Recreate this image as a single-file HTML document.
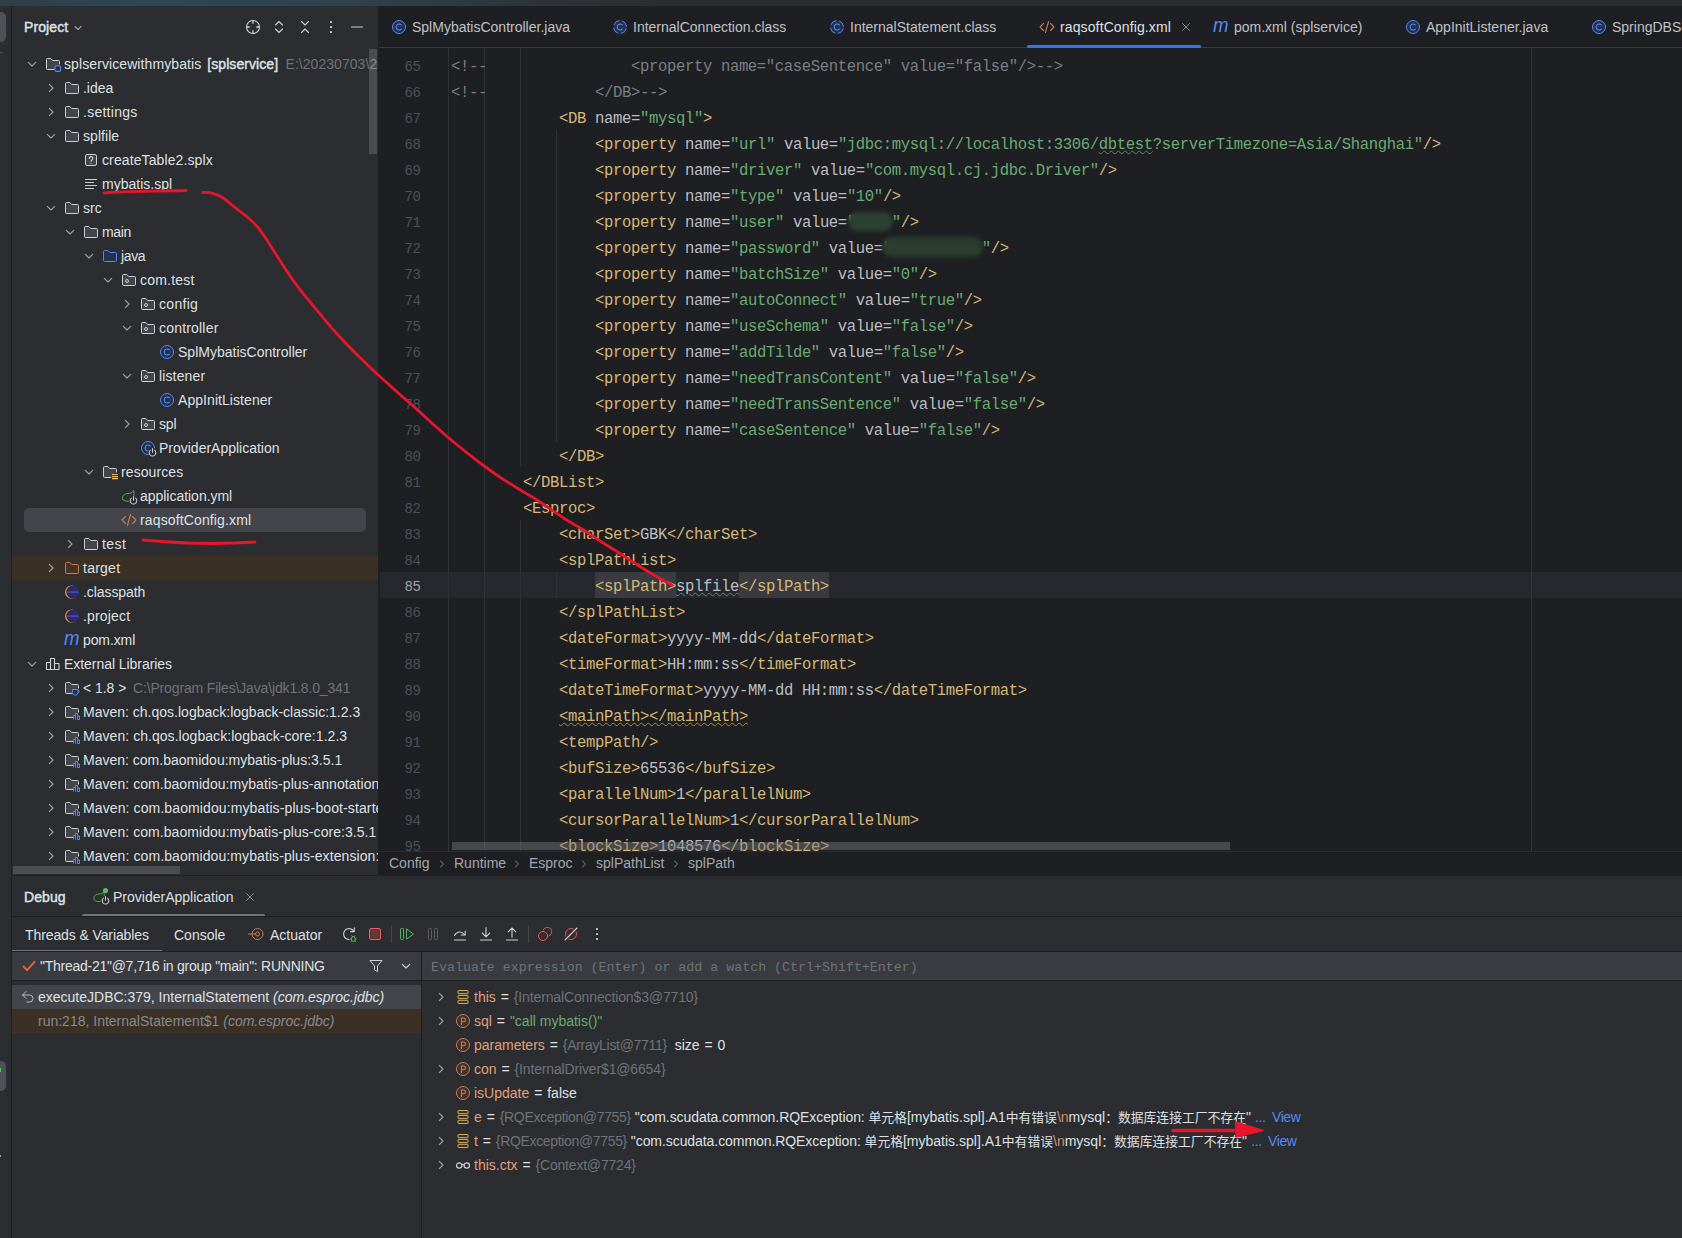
<!DOCTYPE html><html><head><meta charset="utf-8"><title>IDE</title><style>
*{box-sizing:border-box;margin:0;padding:0}
html,body{width:1682px;height:1238px;overflow:hidden;background:#2b2d30}
body{font-family:"Liberation Sans","Noto Sans CJK SC",sans-serif;font-size:14px;color:#dfe1e5;-webkit-font-smoothing:antialiased}
#root{position:relative;width:1682px;height:1238px;overflow:hidden;background:#2b2d30}
.a{position:absolute;white-space:pre}
.t{position:absolute;white-space:pre;line-height:24px;height:24px}
.g{color:#6f737a}
.ic{position:absolute;width:16px;height:16px}
svg{display:block;overflow:visible}
.code{position:absolute;left:451px;white-space:pre;font-family:"Liberation Mono","Noto Sans CJK SC",monospace;font-size:15.6px;letter-spacing:-0.3616px;line-height:26px;height:26px;color:#bcbec4}
.ln{position:absolute;width:40px;left:380.2px;text-align:right;font-family:"Liberation Mono","Noto Sans CJK SC",monospace;font-size:14px;letter-spacing:-0.6px;line-height:26px;height:26px;color:#4b5059}
.tg{color:#d5b778} .s{color:#6aab73} .c{color:#7a7e85}
.wv{text-decoration:underline wavy #5a8a5e 1px;text-underline-offset:1px}
.ww{text-decoration:underline wavy #a08c4a 1px;text-underline-offset:1px}
.hl{background:#393b41;display:inline-block;height:26px;vertical-align:top}
.vn{color:#e0a07a}
.mono{font-family:"Liberation Mono","Noto Sans CJK SC",monospace}
</style></head><body><div id="root">
<div class="a" style="left:0px;top:0px;width:1682px;height:6px;background:linear-gradient(90deg,#2d3e47 0,#2f4854 9%,#2e414b 22%,#2c343a 32%,#2b2d30 40%);"></div>
<div class="a" style="left:0px;top:6px;width:11px;height:1232px;background:#2b2d30;"></div>
<div class="a" style="left:11px;top:6px;width:1px;height:1232px;background:#1e1f22;"></div>
<div class="a" style="left:-6px;top:12px;width:12px;height:30px;background:#4e5157;border-radius:5px"></div>
<div class="a" style="left:0px;top:52px;width:3px;height:1px;background:#4a4c50;"></div>
<div class="a" style="left:-6px;top:1061px;width:12px;height:30px;background:#4e5157;border-radius:5px"></div>
<div class="a" style="left:0px;top:1068px;width:1px;height:4px;background:#57c55a;"></div>
<div class="a" style="left:0px;top:1155px;width:1px;height:2px;background:#9da0a8;"></div>
<div class="a" style="left:12px;top:6px;width:366px;height:869px;background:#2b2d30;"></div>
<div class="a" style="left:378px;top:6px;width:1px;height:869px;background:#1e1f22;"></div>
<div class="t " style="left:24px;top:15.4px;-webkit-text-stroke:0.45px #dfe1e5;letter-spacing:0.1px">Project</div>
<div class="ic" style="left:70px;top:20px"><svg width="16" height="16" viewBox="0 0 16 16" fill="none"><path d="M5 6.5 L8 9.5 L11 6.5" stroke="#9da0a8" stroke-width="1.1" stroke-linecap="round" stroke-linejoin="round"/></svg></div>
<div class="ic" style="left:245px;top:19px"><svg width="16" height="16" viewBox="0 0 16 16" fill="none"><circle cx="8" cy="8" r="6.5" stroke="#ced0d6" stroke-width="1.1"/><path d="M8 1.5 v3.2 M8 11.3 v3.2 M1.5 8 h3.2 M11.3 8 h3.2" stroke="#ced0d6" stroke-width="1.3"/></svg></div>
<div class="ic" style="left:271px;top:19px"><svg width="16" height="16" viewBox="0 0 16 16" fill="none"><path d="M4.5 6 L8 2.5 L11.5 6 M4.5 10 L8 13.5 L11.5 10" stroke="#ced0d6" stroke-width="1.1" stroke-linecap="round" stroke-linejoin="round"/></svg></div>
<div class="ic" style="left:297px;top:19px"><svg width="16" height="16" viewBox="0 0 16 16" fill="none"><path d="M4.5 2.5 L8 6 L11.5 2.5 M4.5 13.5 L8 10 L11.5 13.5" stroke="#ced0d6" stroke-width="1.1" stroke-linecap="round" stroke-linejoin="round"/></svg></div>
<div class="ic" style="left:323px;top:19px"><svg width="16" height="16" viewBox="0 0 16 16" fill="none"><rect x="7" y="2" width="2" height="2" rx=".4" fill="#ced0d6"/><rect x="7" y="7" width="2" height="2" rx=".4" fill="#ced0d6"/><rect x="7" y="12" width="2" height="2" rx=".4" fill="#ced0d6"/></svg></div>
<div class="ic" style="left:349px;top:19px"><svg width="16" height="16" viewBox="0 0 16 16" fill="none"><path d="M2.5 8 h11" stroke="#ced0d6" stroke-width="1.2" stroke-linecap="round"/></svg></div>
<div class="a" style="left:12px;top:556px;width:366px;height:24px;background:#3b3024;"></div>
<div class="a" style="left:24px;top:508px;width:342px;height:24px;background:#43454a;border-radius:5px"></div>
<div class="a" style="left:12px;top:50px;width:366px;height:815px;overflow:hidden">
<div class="ic" style="left:12px;top:6px"><svg width="16" height="16" viewBox="0 0 16 16" fill="none"><path d="M4.3 6.3 L8 10 L11.7 6.3" stroke="#9da0a8" stroke-width="1.15" stroke-linecap="round" stroke-linejoin="round"/></svg></div>
<div class="ic" style="left:33px;top:6px"><svg width="16" height="16" viewBox="0 0 16 16" fill="none"><path d="M9 13.5 h-6.5 a1 1 0 0 1 -1 -1 v-9 a1 1 0 0 1 1 -1 h3.3 l1.9 2 h5.8 a1 1 0 0 1 1 1 v2.5" fill="#43454a" stroke="#ced0d6" stroke-width="1" stroke-linejoin="round" stroke-linecap="round"/><rect x="10" y="9.8" width="5.6" height="5.6" rx="1.2" fill="#25324d" stroke="#548af7" stroke-width="1.1"/></svg></div>
<div class="t " style="left:52px;top:2.4px;"><span style="letter-spacing:0.092px">splservicewithmybatis</span><span style="position:absolute;left:143.3px;-webkit-text-stroke:0.45px #dfe1e5;letter-spacing:0.064px">[splservice]</span><span class="g" style="position:absolute;left:221.5px;letter-spacing:0.05px">E:\20230703\20230703</span></div>
<div class="ic" style="left:31px;top:30px"><svg width="16" height="16" viewBox="0 0 16 16" fill="none"><path d="M6.3 4.3 L10 8 L6.3 11.7" stroke="#9da0a8" stroke-width="1.15" stroke-linecap="round" stroke-linejoin="round"/></svg></div>
<div class="ic" style="left:52px;top:30px"><svg width="16" height="16" viewBox="0 0 16 16" fill="none"><path d="M1.5 3.5 a1 1 0 0 1 1 -1 h3.3 l1.9 2 h5.8 a1 1 0 0 1 1 1 v7 a1 1 0 0 1 -1 1 h-11 a1 1 0 0 1 -1 -1 z" fill="#43454a" stroke="#ced0d6" stroke-width="1" stroke-linejoin="round"/></svg></div>
<div class="t " style="left:71px;top:26.4px;letter-spacing:-0.032px">.idea</div>
<div class="ic" style="left:31px;top:54px"><svg width="16" height="16" viewBox="0 0 16 16" fill="none"><path d="M6.3 4.3 L10 8 L6.3 11.7" stroke="#9da0a8" stroke-width="1.15" stroke-linecap="round" stroke-linejoin="round"/></svg></div>
<div class="ic" style="left:52px;top:54px"><svg width="16" height="16" viewBox="0 0 16 16" fill="none"><path d="M1.5 3.5 a1 1 0 0 1 1 -1 h3.3 l1.9 2 h5.8 a1 1 0 0 1 1 1 v7 a1 1 0 0 1 -1 1 h-11 a1 1 0 0 1 -1 -1 z" fill="#43454a" stroke="#ced0d6" stroke-width="1" stroke-linejoin="round"/></svg></div>
<div class="t " style="left:71px;top:50.4px;letter-spacing:0.262px">.settings</div>
<div class="ic" style="left:31px;top:78px"><svg width="16" height="16" viewBox="0 0 16 16" fill="none"><path d="M4.3 6.3 L8 10 L11.7 6.3" stroke="#9da0a8" stroke-width="1.15" stroke-linecap="round" stroke-linejoin="round"/></svg></div>
<div class="ic" style="left:52px;top:78px"><svg width="16" height="16" viewBox="0 0 16 16" fill="none"><path d="M1.5 3.5 a1 1 0 0 1 1 -1 h3.3 l1.9 2 h5.8 a1 1 0 0 1 1 1 v7 a1 1 0 0 1 -1 1 h-11 a1 1 0 0 1 -1 -1 z" fill="#43454a" stroke="#ced0d6" stroke-width="1" stroke-linejoin="round"/></svg></div>
<div class="t " style="left:71px;top:74.4px;letter-spacing:0.058px">splfile</div>
<div class="ic" style="left:71px;top:102px"><svg width="16" height="16" viewBox="0 0 16 16" fill="none"><rect x="2.5" y="2.5" width="11" height="11" rx="1.5" fill="#43454a" stroke="#ced0d6" stroke-width="1"/><path d="M6.3 6.4 a1.75 1.75 0 1 1 2.6 1.5 c-.6 .35 -.9 .7 -.9 1.3" stroke="#ced0d6" stroke-width="1.1" stroke-linecap="round"/><circle cx="8" cy="11.1" r=".7" fill="#ced0d6"/></svg></div>
<div class="t " style="left:90px;top:98.4px;letter-spacing:0.109px">createTable2.splx</div>
<div class="ic" style="left:71px;top:126px"><svg width="16" height="16" viewBox="0 0 16 16" fill="none"><path d="M2.5 3.5 h11 M2.5 6.5 h8 M2.5 9.5 h11 M2.5 12.5 h8" stroke="#ced0d6" stroke-width="1" stroke-linecap="round"/></svg></div>
<div class="t " style="left:90px;top:122.4px;letter-spacing:0.015px">mybatis.spl</div>
<div class="ic" style="left:31px;top:150px"><svg width="16" height="16" viewBox="0 0 16 16" fill="none"><path d="M4.3 6.3 L8 10 L11.7 6.3" stroke="#9da0a8" stroke-width="1.15" stroke-linecap="round" stroke-linejoin="round"/></svg></div>
<div class="ic" style="left:52px;top:150px"><svg width="16" height="16" viewBox="0 0 16 16" fill="none"><path d="M1.5 3.5 a1 1 0 0 1 1 -1 h3.3 l1.9 2 h5.8 a1 1 0 0 1 1 1 v7 a1 1 0 0 1 -1 1 h-11 a1 1 0 0 1 -1 -1 z" fill="#43454a" stroke="#ced0d6" stroke-width="1" stroke-linejoin="round"/></svg></div>
<div class="t " style="left:71px;top:146.4px;letter-spacing:0.043px">src</div>
<div class="ic" style="left:50px;top:174px"><svg width="16" height="16" viewBox="0 0 16 16" fill="none"><path d="M4.3 6.3 L8 10 L11.7 6.3" stroke="#9da0a8" stroke-width="1.15" stroke-linecap="round" stroke-linejoin="round"/></svg></div>
<div class="ic" style="left:71px;top:174px"><svg width="16" height="16" viewBox="0 0 16 16" fill="none"><path d="M1.5 3.5 a1 1 0 0 1 1 -1 h3.3 l1.9 2 h5.8 a1 1 0 0 1 1 1 v7 a1 1 0 0 1 -1 1 h-11 a1 1 0 0 1 -1 -1 z" fill="#43454a" stroke="#ced0d6" stroke-width="1" stroke-linejoin="round"/></svg></div>
<div class="t " style="left:90px;top:170.4px;letter-spacing:-0.390px">main</div>
<div class="ic" style="left:69px;top:198px"><svg width="16" height="16" viewBox="0 0 16 16" fill="none"><path d="M4.3 6.3 L8 10 L11.7 6.3" stroke="#9da0a8" stroke-width="1.15" stroke-linecap="round" stroke-linejoin="round"/></svg></div>
<div class="ic" style="left:90px;top:198px"><svg width="16" height="16" viewBox="0 0 16 16" fill="none"><path d="M1.5 3.5 a1 1 0 0 1 1 -1 h3.3 l1.9 2 h5.8 a1 1 0 0 1 1 1 v7 a1 1 0 0 1 -1 1 h-11 a1 1 0 0 1 -1 -1 z" fill="#25324d" stroke="#548af7" stroke-width="1" stroke-linejoin="round"/></svg></div>
<div class="t " style="left:109px;top:194.4px;letter-spacing:-0.372px">java</div>
<div class="ic" style="left:88px;top:222px"><svg width="16" height="16" viewBox="0 0 16 16" fill="none"><path d="M4.3 6.3 L8 10 L11.7 6.3" stroke="#9da0a8" stroke-width="1.15" stroke-linecap="round" stroke-linejoin="round"/></svg></div>
<div class="ic" style="left:109px;top:222px"><svg width="16" height="16" viewBox="0 0 16 16" fill="none"><path d="M1.5 3.5 a1 1 0 0 1 1 -1 h3.3 l1.9 2 h5.8 a1 1 0 0 1 1 1 v7 a1 1 0 0 1 -1 1 h-11 a1 1 0 0 1 -1 -1 z" fill="#43454a" stroke="#ced0d6" stroke-width="1" stroke-linejoin="round"/><circle cx="6" cy="9" r="1.5" stroke="#ced0d6" stroke-width="1"/></svg></div>
<div class="t " style="left:128px;top:218.4px;letter-spacing:0.199px">com.test</div>
<div class="ic" style="left:107px;top:246px"><svg width="16" height="16" viewBox="0 0 16 16" fill="none"><path d="M6.3 4.3 L10 8 L6.3 11.7" stroke="#9da0a8" stroke-width="1.15" stroke-linecap="round" stroke-linejoin="round"/></svg></div>
<div class="ic" style="left:128px;top:246px"><svg width="16" height="16" viewBox="0 0 16 16" fill="none"><path d="M1.5 3.5 a1 1 0 0 1 1 -1 h3.3 l1.9 2 h5.8 a1 1 0 0 1 1 1 v7 a1 1 0 0 1 -1 1 h-11 a1 1 0 0 1 -1 -1 z" fill="#43454a" stroke="#ced0d6" stroke-width="1" stroke-linejoin="round"/><circle cx="6" cy="9" r="1.5" stroke="#ced0d6" stroke-width="1"/></svg></div>
<div class="t " style="left:147px;top:242.4px;letter-spacing:0.307px">config</div>
<div class="ic" style="left:107px;top:270px"><svg width="16" height="16" viewBox="0 0 16 16" fill="none"><path d="M4.3 6.3 L8 10 L11.7 6.3" stroke="#9da0a8" stroke-width="1.15" stroke-linecap="round" stroke-linejoin="round"/></svg></div>
<div class="ic" style="left:128px;top:270px"><svg width="16" height="16" viewBox="0 0 16 16" fill="none"><path d="M1.5 3.5 a1 1 0 0 1 1 -1 h3.3 l1.9 2 h5.8 a1 1 0 0 1 1 1 v7 a1 1 0 0 1 -1 1 h-11 a1 1 0 0 1 -1 -1 z" fill="#43454a" stroke="#ced0d6" stroke-width="1" stroke-linejoin="round"/><circle cx="6" cy="9" r="1.5" stroke="#ced0d6" stroke-width="1"/></svg></div>
<div class="t " style="left:147px;top:266.4px;letter-spacing:0.191px">controller</div>
<div class="ic" style="left:147px;top:294px"><svg width="16" height="16" viewBox="0 0 16 16" fill="none"><circle cx="8" cy="8" r="6.5" fill="#25324d" stroke="#548af7" stroke-width="1"/><path d="M10.3 5.9 a3 3 0 1 0 0 4.2" stroke="#548af7" stroke-width="1.1" stroke-linecap="round"/></svg></div>
<div class="t " style="left:166px;top:290.4px;letter-spacing:0.006px">SplMybatisController</div>
<div class="ic" style="left:107px;top:318px"><svg width="16" height="16" viewBox="0 0 16 16" fill="none"><path d="M4.3 6.3 L8 10 L11.7 6.3" stroke="#9da0a8" stroke-width="1.15" stroke-linecap="round" stroke-linejoin="round"/></svg></div>
<div class="ic" style="left:128px;top:318px"><svg width="16" height="16" viewBox="0 0 16 16" fill="none"><path d="M1.5 3.5 a1 1 0 0 1 1 -1 h3.3 l1.9 2 h5.8 a1 1 0 0 1 1 1 v7 a1 1 0 0 1 -1 1 h-11 a1 1 0 0 1 -1 -1 z" fill="#43454a" stroke="#ced0d6" stroke-width="1" stroke-linejoin="round"/><circle cx="6" cy="9" r="1.5" stroke="#ced0d6" stroke-width="1"/></svg></div>
<div class="t " style="left:147px;top:314.4px;letter-spacing:0.132px">listener</div>
<div class="ic" style="left:147px;top:342px"><svg width="16" height="16" viewBox="0 0 16 16" fill="none"><circle cx="8" cy="8" r="6.5" fill="#25324d" stroke="#548af7" stroke-width="1"/><path d="M10.3 5.9 a3 3 0 1 0 0 4.2" stroke="#548af7" stroke-width="1.1" stroke-linecap="round"/></svg></div>
<div class="t " style="left:166px;top:338.4px;letter-spacing:0.060px">AppInitListener</div>
<div class="ic" style="left:107px;top:366px"><svg width="16" height="16" viewBox="0 0 16 16" fill="none"><path d="M6.3 4.3 L10 8 L6.3 11.7" stroke="#9da0a8" stroke-width="1.15" stroke-linecap="round" stroke-linejoin="round"/></svg></div>
<div class="ic" style="left:128px;top:366px"><svg width="16" height="16" viewBox="0 0 16 16" fill="none"><path d="M1.5 3.5 a1 1 0 0 1 1 -1 h3.3 l1.9 2 h5.8 a1 1 0 0 1 1 1 v7 a1 1 0 0 1 -1 1 h-11 a1 1 0 0 1 -1 -1 z" fill="#43454a" stroke="#ced0d6" stroke-width="1" stroke-linejoin="round"/><circle cx="6" cy="9" r="1.5" stroke="#ced0d6" stroke-width="1"/></svg></div>
<div class="t " style="left:147px;top:362.4px;letter-spacing:-0.135px">spl</div>
<div class="ic" style="left:128px;top:390px"><svg width="16" height="16" viewBox="0 0 16 16" fill="none"><circle cx="8" cy="8" r="6.5" fill="#25324d" stroke="#548af7" stroke-width="1"/><path d="M10.3 5.9 a3 3 0 1 0 0 4.2" stroke="#548af7" stroke-width="1.1" stroke-linecap="round"/><circle cx="12.5" cy="12.3" r="4.6" fill="#2b2d30"/><path d="M10.4 10.2 a3.3 3.3 0 1 0 4.2 0 M12.5 8.6 v3.6" stroke="#ced0d6" stroke-width="1.05" stroke-linecap="round"/></svg></div>
<div class="t " style="left:147px;top:386.4px;letter-spacing:-0.007px">ProviderApplication</div>
<div class="ic" style="left:69px;top:414px"><svg width="16" height="16" viewBox="0 0 16 16" fill="none"><path d="M4.3 6.3 L8 10 L11.7 6.3" stroke="#9da0a8" stroke-width="1.15" stroke-linecap="round" stroke-linejoin="round"/></svg></div>
<div class="ic" style="left:90px;top:414px"><svg width="16" height="16" viewBox="0 0 16 16" fill="none"><path d="M9 13.5 h-6.5 a1 1 0 0 1 -1 -1 v-9 a1 1 0 0 1 1 -1 h3.3 l1.9 2 h5.8 a1 1 0 0 1 1 1 v2.5" fill="#43454a" stroke="#ced0d6" stroke-width="1" stroke-linejoin="round" stroke-linecap="round"/><path d="M10 10.5 h6 M10 12.6 h6 M10 14.7 h6" stroke="#e8bf5e" stroke-width="1.2"/></svg></div>
<div class="t " style="left:109px;top:410.4px;letter-spacing:0.092px">resources</div>
<div class="ic" style="left:109px;top:438px"><svg width="16" height="16" viewBox="0 0 16 16" fill="none"><path d="M1.5 11.5 c-.8 -3.5 2 -6 5.5 -6 c2.5 0 4.5 -1 5.5 -3 c1.2 4 .3 8 -2.5 9.8 c-2.5 1.5 -6 1.2 -8.5 -.8 z" fill="#253627" stroke="#5fa865" stroke-width="1" stroke-linejoin="round"/><circle cx="12.5" cy="12.3" r="4.6" fill="#2b2d30"/><path d="M10.4 10.2 a3.3 3.3 0 1 0 4.2 0 M12.5 8.6 v3.6" stroke="#ced0d6" stroke-width="1.05" stroke-linecap="round"/></svg></div>
<div class="t " style="left:128px;top:434.4px;letter-spacing:-0.027px">application.yml</div>
<div class="ic" style="left:109px;top:462px"><svg width="16" height="16" viewBox="0 0 16 16" fill="none"><path d="M4.5 4.5 L1 8 L4.5 11.5 M11.5 4.5 L15 8 L11.5 11.5 M9.6 2.5 L6.4 13.5" stroke="#c77d55" stroke-width="1.1" stroke-linecap="round" stroke-linejoin="round"/></svg></div>
<div class="t " style="left:128px;top:458.4px;letter-spacing:0.133px">raqsoftConfig.xml</div>
<div class="ic" style="left:50px;top:486px"><svg width="16" height="16" viewBox="0 0 16 16" fill="none"><path d="M6.3 4.3 L10 8 L6.3 11.7" stroke="#9da0a8" stroke-width="1.15" stroke-linecap="round" stroke-linejoin="round"/></svg></div>
<div class="ic" style="left:71px;top:486px"><svg width="16" height="16" viewBox="0 0 16 16" fill="none"><path d="M1.5 3.5 a1 1 0 0 1 1 -1 h3.3 l1.9 2 h5.8 a1 1 0 0 1 1 1 v7 a1 1 0 0 1 -1 1 h-11 a1 1 0 0 1 -1 -1 z" fill="#43454a" stroke="#ced0d6" stroke-width="1" stroke-linejoin="round"/></svg></div>
<div class="t " style="left:90px;top:482.4px;letter-spacing:0.405px">test</div>
<div class="ic" style="left:31px;top:510px"><svg width="16" height="16" viewBox="0 0 16 16" fill="none"><path d="M6.3 4.3 L10 8 L6.3 11.7" stroke="#9da0a8" stroke-width="1.15" stroke-linecap="round" stroke-linejoin="round"/></svg></div>
<div class="ic" style="left:52px;top:510px"><svg width="16" height="16" viewBox="0 0 16 16" fill="none"><path d="M1.5 3.5 a1 1 0 0 1 1 -1 h3.3 l1.9 2 h5.8 a1 1 0 0 1 1 1 v7 a1 1 0 0 1 -1 1 h-11 a1 1 0 0 1 -1 -1 z" fill="#45322b" stroke="#c77d55" stroke-width="1" stroke-linejoin="round"/></svg></div>
<div class="t " style="left:71px;top:506.4px;letter-spacing:0.248px">target</div>
<div class="ic" style="left:52px;top:534px"><svg width="16" height="16" viewBox="0 0 16 16" fill="none"><circle cx="7.6" cy="8" r="6.6" fill="#e59140"/><circle cx="8.7" cy="8" r="6.3" fill="#2b2d30"/><circle cx="9.0" cy="8" r="6.1" fill="#2d2a6e"/><path d="M3.4 7.2 h11.4 v1.8 h-11.4 z" fill="#4a46a3"/></svg></div>
<div class="t " style="left:71px;top:530.4px;letter-spacing:-0.075px">.classpath</div>
<div class="ic" style="left:52px;top:558px"><svg width="16" height="16" viewBox="0 0 16 16" fill="none"><circle cx="7.6" cy="8" r="6.6" fill="#e59140"/><circle cx="8.7" cy="8" r="6.3" fill="#2b2d30"/><circle cx="9.0" cy="8" r="6.1" fill="#2d2a6e"/><path d="M3.4 7.2 h11.4 v1.8 h-11.4 z" fill="#4a46a3"/></svg></div>
<div class="t " style="left:71px;top:554.4px;letter-spacing:0.172px">.project</div>
<div class="ic" style="left:52px;top:582px"><svg width="16" height="16" viewBox="0 0 16 16"><text x="0" y="13" font-family="Liberation Sans,sans-serif" font-style="italic" font-size="19.5" fill="#548af7" textLength="15.5" lengthAdjust="spacingAndGlyphs">m</text></svg></div>
<div class="t " style="left:71px;top:578.4px;letter-spacing:-0.101px">pom.xml</div>
<div class="ic" style="left:12px;top:606px"><svg width="16" height="16" viewBox="0 0 16 16" fill="none"><path d="M4.3 6.3 L8 10 L11.7 6.3" stroke="#9da0a8" stroke-width="1.15" stroke-linecap="round" stroke-linejoin="round"/></svg></div>
<div class="ic" style="left:33px;top:606px"><svg width="16" height="16" viewBox="0 0 16 16" fill="none"><path d="M1.5 13.5 v-7 h4 v7 z M5.5 13.5 v-11 h4 v11 z M9.5 13.5 v-6 h4.5 v6 z" stroke="#ced0d6" stroke-width="1.1" stroke-linejoin="round"/></svg></div>
<div class="t " style="left:52px;top:602.4px;letter-spacing:-0.052px">External Libraries</div>
<div class="ic" style="left:31px;top:630px"><svg width="16" height="16" viewBox="0 0 16 16" fill="none"><path d="M6.3 4.3 L10 8 L6.3 11.7" stroke="#9da0a8" stroke-width="1.15" stroke-linecap="round" stroke-linejoin="round"/></svg></div>
<div class="ic" style="left:52px;top:630px"><svg width="16" height="16" viewBox="0 0 16 16" fill="none"><path d="M9 13.5 h-6.5 a1 1 0 0 1 -1 -1 v-9 a1 1 0 0 1 1 -1 h3.3 l1.9 2 h5.8 a1 1 0 0 1 1 1 v2.5" fill="#43454a" stroke="#ced0d6" stroke-width="1" stroke-linejoin="round" stroke-linecap="round"/><path d="M8.5 9.5 h5.5 v3 a2.75 2.75 0 0 1 -5.5 0 z" fill="#25324d" stroke="#548af7" stroke-width="1" stroke-linejoin="round"/><path d="M14 10.3 a1.2 1.2 0 0 1 0 2.4" stroke="#548af7" stroke-width="1"/></svg></div>
<div class="t " style="left:71px;top:626.4px;"><span style="letter-spacing:-0.042px">&lt; 1.8 &gt;</span><span class="g" style="position:absolute;left:50px;letter-spacing:-0.155px">C:\Program Files\Java\jdk1.8.0_341</span></div>
<div class="ic" style="left:31px;top:654px"><svg width="16" height="16" viewBox="0 0 16 16" fill="none"><path d="M6.3 4.3 L10 8 L6.3 11.7" stroke="#9da0a8" stroke-width="1.15" stroke-linecap="round" stroke-linejoin="round"/></svg></div>
<div class="ic" style="left:52px;top:654px"><svg width="16" height="16" viewBox="0 0 16 16" fill="none"><path d="M9 13.5 h-6.5 a1 1 0 0 1 -1 -1 v-9 a1 1 0 0 1 1 -1 h3.3 l1.9 2 h5.8 a1 1 0 0 1 1 1 v2.5" fill="#43454a" stroke="#ced0d6" stroke-width="1" stroke-linejoin="round" stroke-linecap="round"/><path d="M9.5 15.5 v-4 h2 v4 M11.5 15.5 v-6 h2 v6 M13.5 15.5 v-3.5 h2 v3.5 z" fill="#25324d" stroke="#548af7" stroke-width="1" stroke-linejoin="round"/></svg></div>
<div class="t " style="left:71px;top:650.4px;letter-spacing:0.004px">Maven: ch.qos.logback:logback-classic:1.2.3</div>
<div class="ic" style="left:31px;top:678px"><svg width="16" height="16" viewBox="0 0 16 16" fill="none"><path d="M6.3 4.3 L10 8 L6.3 11.7" stroke="#9da0a8" stroke-width="1.15" stroke-linecap="round" stroke-linejoin="round"/></svg></div>
<div class="ic" style="left:52px;top:678px"><svg width="16" height="16" viewBox="0 0 16 16" fill="none"><path d="M9 13.5 h-6.5 a1 1 0 0 1 -1 -1 v-9 a1 1 0 0 1 1 -1 h3.3 l1.9 2 h5.8 a1 1 0 0 1 1 1 v2.5" fill="#43454a" stroke="#ced0d6" stroke-width="1" stroke-linejoin="round" stroke-linecap="round"/><path d="M9.5 15.5 v-4 h2 v4 M11.5 15.5 v-6 h2 v6 M13.5 15.5 v-3.5 h2 v3.5 z" fill="#25324d" stroke="#548af7" stroke-width="1" stroke-linejoin="round"/></svg></div>
<div class="t " style="left:71px;top:674.4px;letter-spacing:0.048px">Maven: ch.qos.logback:logback-core:1.2.3</div>
<div class="ic" style="left:31px;top:702px"><svg width="16" height="16" viewBox="0 0 16 16" fill="none"><path d="M6.3 4.3 L10 8 L6.3 11.7" stroke="#9da0a8" stroke-width="1.15" stroke-linecap="round" stroke-linejoin="round"/></svg></div>
<div class="ic" style="left:52px;top:702px"><svg width="16" height="16" viewBox="0 0 16 16" fill="none"><path d="M9 13.5 h-6.5 a1 1 0 0 1 -1 -1 v-9 a1 1 0 0 1 1 -1 h3.3 l1.9 2 h5.8 a1 1 0 0 1 1 1 v2.5" fill="#43454a" stroke="#ced0d6" stroke-width="1" stroke-linejoin="round" stroke-linecap="round"/><path d="M9.5 15.5 v-4 h2 v4 M11.5 15.5 v-6 h2 v6 M13.5 15.5 v-3.5 h2 v3.5 z" fill="#25324d" stroke="#548af7" stroke-width="1" stroke-linejoin="round"/></svg></div>
<div class="t " style="left:71px;top:698.4px;letter-spacing:0.002px">Maven: com.baomidou:mybatis-plus:3.5.1</div>
<div class="ic" style="left:31px;top:726px"><svg width="16" height="16" viewBox="0 0 16 16" fill="none"><path d="M6.3 4.3 L10 8 L6.3 11.7" stroke="#9da0a8" stroke-width="1.15" stroke-linecap="round" stroke-linejoin="round"/></svg></div>
<div class="ic" style="left:52px;top:726px"><svg width="16" height="16" viewBox="0 0 16 16" fill="none"><path d="M9 13.5 h-6.5 a1 1 0 0 1 -1 -1 v-9 a1 1 0 0 1 1 -1 h3.3 l1.9 2 h5.8 a1 1 0 0 1 1 1 v2.5" fill="#43454a" stroke="#ced0d6" stroke-width="1" stroke-linejoin="round" stroke-linecap="round"/><path d="M9.5 15.5 v-4 h2 v4 M11.5 15.5 v-6 h2 v6 M13.5 15.5 v-3.5 h2 v3.5 z" fill="#25324d" stroke="#548af7" stroke-width="1" stroke-linejoin="round"/></svg></div>
<div class="t " style="left:71px;top:722.4px;letter-spacing:0.050px">Maven: com.baomidou:mybatis-plus-annotation:3.5.1</div>
<div class="ic" style="left:31px;top:750px"><svg width="16" height="16" viewBox="0 0 16 16" fill="none"><path d="M6.3 4.3 L10 8 L6.3 11.7" stroke="#9da0a8" stroke-width="1.15" stroke-linecap="round" stroke-linejoin="round"/></svg></div>
<div class="ic" style="left:52px;top:750px"><svg width="16" height="16" viewBox="0 0 16 16" fill="none"><path d="M9 13.5 h-6.5 a1 1 0 0 1 -1 -1 v-9 a1 1 0 0 1 1 -1 h3.3 l1.9 2 h5.8 a1 1 0 0 1 1 1 v2.5" fill="#43454a" stroke="#ced0d6" stroke-width="1" stroke-linejoin="round" stroke-linecap="round"/><path d="M9.5 15.5 v-4 h2 v4 M11.5 15.5 v-6 h2 v6 M13.5 15.5 v-3.5 h2 v3.5 z" fill="#25324d" stroke="#548af7" stroke-width="1" stroke-linejoin="round"/></svg></div>
<div class="t " style="left:71px;top:746.4px;letter-spacing:0.110px">Maven: com.baomidou:mybatis-plus-boot-starter:3.5.1</div>
<div class="ic" style="left:31px;top:774px"><svg width="16" height="16" viewBox="0 0 16 16" fill="none"><path d="M6.3 4.3 L10 8 L6.3 11.7" stroke="#9da0a8" stroke-width="1.15" stroke-linecap="round" stroke-linejoin="round"/></svg></div>
<div class="ic" style="left:52px;top:774px"><svg width="16" height="16" viewBox="0 0 16 16" fill="none"><path d="M9 13.5 h-6.5 a1 1 0 0 1 -1 -1 v-9 a1 1 0 0 1 1 -1 h3.3 l1.9 2 h5.8 a1 1 0 0 1 1 1 v2.5" fill="#43454a" stroke="#ced0d6" stroke-width="1" stroke-linejoin="round" stroke-linecap="round"/><path d="M9.5 15.5 v-4 h2 v4 M11.5 15.5 v-6 h2 v6 M13.5 15.5 v-3.5 h2 v3.5 z" fill="#25324d" stroke="#548af7" stroke-width="1" stroke-linejoin="round"/></svg></div>
<div class="t " style="left:71px;top:770.4px;letter-spacing:0.055px">Maven: com.baomidou:mybatis-plus-core:3.5.1</div>
<div class="ic" style="left:31px;top:798px"><svg width="16" height="16" viewBox="0 0 16 16" fill="none"><path d="M6.3 4.3 L10 8 L6.3 11.7" stroke="#9da0a8" stroke-width="1.15" stroke-linecap="round" stroke-linejoin="round"/></svg></div>
<div class="ic" style="left:52px;top:798px"><svg width="16" height="16" viewBox="0 0 16 16" fill="none"><path d="M9 13.5 h-6.5 a1 1 0 0 1 -1 -1 v-9 a1 1 0 0 1 1 -1 h3.3 l1.9 2 h5.8 a1 1 0 0 1 1 1 v2.5" fill="#43454a" stroke="#ced0d6" stroke-width="1" stroke-linejoin="round" stroke-linecap="round"/><path d="M9.5 15.5 v-4 h2 v4 M11.5 15.5 v-6 h2 v6 M13.5 15.5 v-3.5 h2 v3.5 z" fill="#25324d" stroke="#548af7" stroke-width="1" stroke-linejoin="round"/></svg></div>
<div class="t " style="left:71px;top:794.4px;letter-spacing:0.090px">Maven: com.baomidou:mybatis-plus-extension:3.5.1</div>
<div class="ic" style="left:31px;top:822px"><svg width="16" height="16" viewBox="0 0 16 16" fill="none"><path d="M6.3 4.3 L10 8 L6.3 11.7" stroke="#9da0a8" stroke-width="1.15" stroke-linecap="round" stroke-linejoin="round"/></svg></div>
<div class="ic" style="left:52px;top:822px"><svg width="16" height="16" viewBox="0 0 16 16" fill="none"><path d="M9 13.5 h-6.5 a1 1 0 0 1 -1 -1 v-9 a1 1 0 0 1 1 -1 h3.3 l1.9 2 h5.8 a1 1 0 0 1 1 1 v2.5" fill="#43454a" stroke="#ced0d6" stroke-width="1" stroke-linejoin="round" stroke-linecap="round"/><path d="M9.5 15.5 v-4 h2 v4 M11.5 15.5 v-6 h2 v6 M13.5 15.5 v-3.5 h2 v3.5 z" fill="#25324d" stroke="#548af7" stroke-width="1" stroke-linejoin="round"/></svg></div>
<div class="t " style="left:71px;top:818.4px;letter-spacing:0.090px">Maven: com.baomidou:mybatis-plus-generator:3.5.1</div>
</div>
<div class="a" style="left:369px;top:49px;width:8px;height:105px;background:rgba(255,255,255,0.15);"></div>
<div class="a" style="left:13px;top:866px;width:167px;height:8px;background:#4b4d51;"></div>
<div class="a" style="left:379px;top:6px;width:1303px;height:42px;background:#1e1f22;"></div>
<div class="a" style="left:379px;top:47px;width:1303px;height:1px;background:#393b40;"></div>
<div class="a" style="left:379px;top:48px;width:1303px;height:804px;background:#1e1f22;"></div>
<div class="ic" style="left:391px;top:19px"><svg width="16" height="16" viewBox="0 0 16 16" fill="none"><circle cx="8" cy="8" r="6.5" fill="#25324d" stroke="#548af7" stroke-width="1"/><path d="M10.3 5.9 a3 3 0 1 0 0 4.2" stroke="#548af7" stroke-width="1.1" stroke-linecap="round"/></svg></div>
<div class="t " style="left:412px;top:15.4px;color:#c0c2c8">SplMybatisController.java</div>
<div class="ic" style="left:612px;top:19px"><svg width="16" height="16" viewBox="0 0 16 16" fill="none"><circle cx="8" cy="8" r="6.5" fill="#25324d"/><circle cx="8" cy="8" r="6.5" stroke="#548af7" stroke-width="1" stroke-dasharray="7.4 2.81" stroke-dashoffset="-1.4"/><path d="M10.3 5.9 a3 3 0 1 0 0 4.2" stroke="#548af7" stroke-width="1.1" stroke-linecap="round"/></svg></div>
<div class="t " style="left:633px;top:15.4px;color:#c0c2c8">InternalConnection.class</div>
<div class="ic" style="left:829px;top:19px"><svg width="16" height="16" viewBox="0 0 16 16" fill="none"><circle cx="8" cy="8" r="6.5" fill="#25324d"/><circle cx="8" cy="8" r="6.5" stroke="#548af7" stroke-width="1" stroke-dasharray="7.4 2.81" stroke-dashoffset="-1.4"/><path d="M10.3 5.9 a3 3 0 1 0 0 4.2" stroke="#548af7" stroke-width="1.1" stroke-linecap="round"/></svg></div>
<div class="t " style="left:850px;top:15.4px;color:#c0c2c8">InternalStatement.class</div>
<div class="ic" style="left:1039px;top:19px"><svg width="16" height="16" viewBox="0 0 16 16" fill="none"><path d="M4.5 4.5 L1 8 L4.5 11.5 M11.5 4.5 L15 8 L11.5 11.5 M9.6 2.5 L6.4 13.5" stroke="#c77d55" stroke-width="1.1" stroke-linecap="round" stroke-linejoin="round"/></svg></div>
<div class="t " style="left:1060px;top:15.4px;color:#dfe1e5;letter-spacing:0.12px">raqsoftConfig.xml</div>
<div class="ic" style="left:1213px;top:19px"><svg width="16" height="16" viewBox="0 0 16 16"><text x="0" y="13" font-family="Liberation Sans,sans-serif" font-style="italic" font-size="19.5" fill="#548af7" textLength="15.5" lengthAdjust="spacingAndGlyphs">m</text></svg></div>
<div class="t " style="left:1234px;top:15.4px;color:#c0c2c8">pom.xml (splservice)</div>
<div class="ic" style="left:1405px;top:19px"><svg width="16" height="16" viewBox="0 0 16 16" fill="none"><circle cx="8" cy="8" r="6.5" fill="#25324d" stroke="#548af7" stroke-width="1"/><path d="M10.3 5.9 a3 3 0 1 0 0 4.2" stroke="#548af7" stroke-width="1.1" stroke-linecap="round"/></svg></div>
<div class="t " style="left:1426px;top:15.4px;color:#c0c2c8">AppInitListener.java</div>
<div class="ic" style="left:1591px;top:19px"><svg width="16" height="16" viewBox="0 0 16 16" fill="none"><circle cx="8" cy="8" r="6.5" fill="#25324d" stroke="#548af7" stroke-width="1"/><path d="M10.3 5.9 a3 3 0 1 0 0 4.2" stroke="#548af7" stroke-width="1.1" stroke-linecap="round"/></svg></div>
<div class="t " style="left:1612px;top:15.4px;color:#c0c2c8">SpringDBSessionFactory.java</div>
<div class="ic" style="left:1178px;top:19px"><svg width="16" height="16" viewBox="0 0 16 16" fill="none"><path d="M4.5 4.5 L11.5 11.5 M11.5 4.5 L4.5 11.5" stroke="#868a91" stroke-width="1" stroke-linecap="round"/></svg></div>
<div class="a" style="left:1027px;top:45px;width:174px;height:3px;background:#3574f0;border-radius:1.5px"></div>
<div class="a" style="left:380px;top:572px;width:1302px;height:26px;background:#26282e;"></div>
<div class="a" style="left:448px;top:48px;width:1px;height:804px;background:#2f3136;"></div>
<div class="a" style="left:484px;top:48px;width:1px;height:804px;background:#2f3136;"></div>
<div class="a" style="left:520px;top:48px;width:1px;height:418px;background:#2f3136;"></div>
<div class="a" style="left:520px;top:520px;width:1px;height:332px;background:#2f3136;"></div>
<div class="a" style="left:556px;top:130px;width:1px;height:312px;background:#2f3136;"></div>
<div class="a" style="left:556px;top:572px;width:1px;height:26px;background:#2f3136;"></div>
<div class="a" style="left:1531px;top:48px;width:1px;height:804px;background:#34363b;"></div>
<div class="ln" style="top:53.9px">65</div>
<div class="code" style="top:53.6px"><span class="c">&lt;!--                &lt;property name="caseSentence" value="false"/&gt;--&gt;</span></div>
<div class="ln" style="top:79.89999999999999px">66</div>
<div class="code" style="top:79.6px"><span class="c">&lt;!--            &lt;/DB&gt;--&gt;</span></div>
<div class="ln" style="top:105.89999999999999px">67</div>
<div class="code" style="top:105.6px">            <span class="tg">&lt;DB</span> name=<span class="s">"mysql"</span><span class="tg">&gt;</span></div>
<div class="ln" style="top:131.9px">68</div>
<div class="code" style="top:131.6px">                <span class="tg">&lt;property</span> name=<span class="s">"url"</span> value=<span class="s">"jdbc:mysql://localhost:3306/<span class="wv">dbtest</span>?serverTimezone=Asia/Shanghai"</span><span class="tg">/&gt;</span></div>
<div class="ln" style="top:157.9px">69</div>
<div class="code" style="top:157.6px">                <span class="tg">&lt;property</span> name=<span class="s">"driver"</span> value=<span class="s">"com.mysql.cj.jdbc.Driver"</span><span class="tg">/&gt;</span></div>
<div class="ln" style="top:183.9px">70</div>
<div class="code" style="top:183.6px">                <span class="tg">&lt;property</span> name=<span class="s">"type"</span> value=<span class="s">"10"</span><span class="tg">/&gt;</span></div>
<div class="ln" style="top:209.9px">71</div>
<div class="code" style="top:209.6px">                <span class="tg">&lt;property</span> name=<span class="s">"user"</span> value=<span class="s">"    "</span><span class="tg">/&gt;</span></div>
<div class="ln" style="top:235.9px">72</div>
<div class="code" style="top:235.6px">                <span class="tg">&lt;property</span> name=<span class="s">"password"</span> value=<span class="s">"          "</span><span class="tg">/&gt;</span></div>
<div class="ln" style="top:261.90000000000003px">73</div>
<div class="code" style="top:261.6px">                <span class="tg">&lt;property</span> name=<span class="s">"batchSize"</span> value=<span class="s">"0"</span><span class="tg">/&gt;</span></div>
<div class="ln" style="top:287.90000000000003px">74</div>
<div class="code" style="top:287.6px">                <span class="tg">&lt;property</span> name=<span class="s">"autoConnect"</span> value=<span class="s">"true"</span><span class="tg">/&gt;</span></div>
<div class="ln" style="top:313.90000000000003px">75</div>
<div class="code" style="top:313.6px">                <span class="tg">&lt;property</span> name=<span class="s">"useSchema"</span> value=<span class="s">"false"</span><span class="tg">/&gt;</span></div>
<div class="ln" style="top:339.90000000000003px">76</div>
<div class="code" style="top:339.6px">                <span class="tg">&lt;property</span> name=<span class="s">"addTilde"</span> value=<span class="s">"false"</span><span class="tg">/&gt;</span></div>
<div class="ln" style="top:365.90000000000003px">77</div>
<div class="code" style="top:365.6px">                <span class="tg">&lt;property</span> name=<span class="s">"needTransContent"</span> value=<span class="s">"false"</span><span class="tg">/&gt;</span></div>
<div class="ln" style="top:391.90000000000003px">78</div>
<div class="code" style="top:391.6px">                <span class="tg">&lt;property</span> name=<span class="s">"needTransSentence"</span> value=<span class="s">"false"</span><span class="tg">/&gt;</span></div>
<div class="ln" style="top:417.90000000000003px">79</div>
<div class="code" style="top:417.6px">                <span class="tg">&lt;property</span> name=<span class="s">"caseSentence"</span> value=<span class="s">"false"</span><span class="tg">/&gt;</span></div>
<div class="ln" style="top:443.90000000000003px">80</div>
<div class="code" style="top:443.6px">            <span class="tg">&lt;/DB&gt;</span></div>
<div class="ln" style="top:469.90000000000003px">81</div>
<div class="code" style="top:469.6px">        <span class="tg">&lt;/DBList&gt;</span></div>
<div class="ln" style="top:495.90000000000003px">82</div>
<div class="code" style="top:495.6px">        <span class="tg">&lt;Esproc&gt;</span></div>
<div class="ln" style="top:521.9px">83</div>
<div class="code" style="top:521.6px">            <span class="tg">&lt;charSet&gt;</span>GBK<span class="tg">&lt;/charSet&gt;</span></div>
<div class="ln" style="top:547.9px">84</div>
<div class="code" style="top:547.6px">            <span class="tg">&lt;splPathList&gt;</span></div>
<div class="a" style="left:595px;top:572px;width:81px;height:26px;background:#393b41;"></div>
<div class="a" style="left:739px;top:572px;width:90px;height:26px;background:#393b41;"></div>
<div class="ln" style="top:573.9px;color:#a1a3ab">85</div>
<div class="code" style="top:573.6px">                <span class="tg">&lt;splPath&gt;</span><span class="wv">splfile</span><span class="tg">&lt;/splPath&gt;</span></div>
<div class="ln" style="top:599.9px">86</div>
<div class="code" style="top:599.6px">            <span class="tg">&lt;/splPathList&gt;</span></div>
<div class="ln" style="top:625.9px">87</div>
<div class="code" style="top:625.6px">            <span class="tg">&lt;dateFormat&gt;</span>yyyy-MM-dd<span class="tg">&lt;/dateFormat&gt;</span></div>
<div class="ln" style="top:651.9px">88</div>
<div class="code" style="top:651.6px">            <span class="tg">&lt;timeFormat&gt;</span>HH:mm:ss<span class="tg">&lt;/timeFormat&gt;</span></div>
<div class="ln" style="top:677.9px">89</div>
<div class="code" style="top:677.6px">            <span class="tg">&lt;dateTimeFormat&gt;</span>yyyy-MM-dd HH:mm:ss<span class="tg">&lt;/dateTimeFormat&gt;</span></div>
<div class="ln" style="top:703.9px">90</div>
<div class="code" style="top:703.6px">            <span class="ww"><span class="tg">&lt;mainPath&gt;&lt;/mainPath&gt;</span></span></div>
<div class="ln" style="top:729.9px">91</div>
<div class="code" style="top:729.6px">            <span class="tg">&lt;tempPath/&gt;</span></div>
<div class="ln" style="top:755.9px">92</div>
<div class="code" style="top:755.6px">            <span class="tg">&lt;bufSize&gt;</span>65536<span class="tg">&lt;/bufSize&gt;</span></div>
<div class="ln" style="top:781.9px">93</div>
<div class="code" style="top:781.6px">            <span class="tg">&lt;parallelNum&gt;</span>1<span class="tg">&lt;/parallelNum&gt;</span></div>
<div class="ln" style="top:807.9px">94</div>
<div class="code" style="top:807.6px">            <span class="tg">&lt;cursorParallelNum&gt;</span>1<span class="tg">&lt;/cursorParallelNum&gt;</span></div>
<div class="ln" style="top:833.9px">95</div>
<div class="code" style="top:833.6px">            <span class="tg">&lt;blockSize&gt;</span>1048576<span class="tg">&lt;/blockSize&gt;</span></div>
<div class="a" style="left:848px;top:212px;width:45px;height:19px;background:#2c4131;filter:blur(2.2px);border-radius:9px"></div>
<div class="a" style="left:882px;top:237px;width:101px;height:20px;background:#2a3d2f;filter:blur(2.2px);border-radius:10px"></div>
<div class="a" style="left:452px;top:842px;width:778px;height:8px;background:rgba(120,122,128,0.45);"></div>
<div class="a" style="left:379px;top:851px;width:1303px;height:1px;background:#2b2d30;"></div>
<div class="a" style="left:379px;top:852px;width:1303px;height:23px;background:#1e1f22;"></div>
<div class="t " style="left:389px;top:851.4px;color:#a4a7ad">Config</div>
<div class="ic" style="left:434px;top:856px"><svg width="16" height="16" viewBox="0 0 16 16" fill="none"><path d="M6.5 5 L9.5 8 L6.5 11" stroke="#5a5d63" stroke-width="1.1" stroke-linecap="round" stroke-linejoin="round"/></svg></div>
<div class="t " style="left:454px;top:851.4px;color:#a4a7ad">Runtime</div>
<div class="ic" style="left:509px;top:856px"><svg width="16" height="16" viewBox="0 0 16 16" fill="none"><path d="M6.5 5 L9.5 8 L6.5 11" stroke="#5a5d63" stroke-width="1.1" stroke-linecap="round" stroke-linejoin="round"/></svg></div>
<div class="t " style="left:529px;top:851.4px;color:#a4a7ad">Esproc</div>
<div class="ic" style="left:576px;top:856px"><svg width="16" height="16" viewBox="0 0 16 16" fill="none"><path d="M6.5 5 L9.5 8 L6.5 11" stroke="#5a5d63" stroke-width="1.1" stroke-linecap="round" stroke-linejoin="round"/></svg></div>
<div class="t " style="left:596px;top:851.4px;color:#a4a7ad">splPathList</div>
<div class="ic" style="left:668px;top:856px"><svg width="16" height="16" viewBox="0 0 16 16" fill="none"><path d="M6.5 5 L9.5 8 L6.5 11" stroke="#5a5d63" stroke-width="1.1" stroke-linecap="round" stroke-linejoin="round"/></svg></div>
<div class="t " style="left:688px;top:851.4px;color:#a4a7ad">splPath</div>
<div class="a" style="left:12px;top:875px;width:1670px;height:1px;background:#1e1f22;"></div>
<div class="a" style="left:12px;top:876px;width:1670px;height:362px;background:#2b2d30;"></div>
<div class="t " style="left:24px;top:885.0px;-webkit-text-stroke:0.45px #dfe1e5;letter-spacing:0.1px">Debug</div>
<div class="ic" style="left:93px;top:888px"><svg width="16" height="16" viewBox="0 0 16 16" fill="none"><path d="M1 11.5 c-.8 -3 1.5 -5.5 5 -5.5 c2 0 3.8 -.6 4.8 -2 c1.2 3.5 .3 7 -2.3 8.8 c-2.5 1.5 -5.5 1 -7.5 -1.3 z" fill="#253627" stroke="#5fa865" stroke-width="1" stroke-linejoin="round"/><circle cx="12.5" cy="12.3" r="4.6" fill="#2b2d30"/><path d="M10.4 10.2 a3.3 3.3 0 1 0 4.2 0 M12.5 8.6 v3.6" stroke="#ced0d6" stroke-width="1.05" stroke-linecap="round"/><circle cx="12.5" cy="2.5" r="2.6" fill="#5fb865"/></svg></div>
<div class="t " style="left:113px;top:885.0px;">ProviderApplication</div>
<div class="ic" style="left:242px;top:889px"><svg width="16" height="16" viewBox="0 0 16 16" fill="none"><path d="M4.5 4.5 L11.5 11.5 M11.5 4.5 L4.5 11.5" stroke="#868a91" stroke-width="1" stroke-linecap="round"/></svg></div>
<div class="a" style="left:82px;top:914px;width:183px;height:3px;background:#6f737a;border-radius:1.5px"></div>
<div class="a" style="left:12px;top:916px;width:1670px;height:1px;background:#1e1f22;"></div>
<div class="t " style="left:25px;top:923.0px;letter-spacing:-0.1px">Threads &amp; Variables</div>
<div class="a" style="left:12px;top:950px;width:150px;height:2px;background:#6f737a;"></div>
<div class="t " style="left:174px;top:923.0px;">Console</div>
<div class="ic" style="left:248px;top:926px"><svg width="16" height="16" viewBox="0 0 16 16" fill="none"><circle cx="9.5" cy="8" r="5.5" stroke="#c77d55" stroke-width="1"/><circle cx="9.5" cy="8" r="2" stroke="#c77d55" stroke-width="1"/><path d="M.5 8 h6.5" stroke="#c77d55" stroke-width="1" stroke-linecap="round"/></svg></div>
<div class="t " style="left:270px;top:923.0px;">Actuator</div>
<div class="ic" style="left:341px;top:926px"><svg width="16" height="16" viewBox="0 0 16 16" fill="none"><path d="M12.8 5.2 a5.5 5.5 0 1 0 .6 4.3" stroke="#ced0d6" stroke-width="1.1" stroke-linecap="round"/><path d="M13.3 1.8 v3.8 h-3.8" stroke="#ced0d6" stroke-width="1.1" stroke-linecap="round" stroke-linejoin="round"/><circle cx="12.3" cy="12.6" r="4" fill="#2b2d30"/><ellipse cx="12.3" cy="13" rx="2" ry="2.5" fill="#253627" stroke="#5fb865" stroke-width="1"/><path d="M10.8 9.8 l.9 .9 M13.8 9.8 l-.9 .9 M9.4 13 h1 M14.2 13 h1 M9.8 15.6 l.9 -.7 M14.8 15.6 l-.9 -.7" stroke="#5fb865" stroke-width=".9" stroke-linecap="round"/></svg></div>
<div class="ic" style="left:367px;top:926px"><svg width="16" height="16" viewBox="0 0 16 16" fill="none"><rect x="2.5" y="2.5" width="11" height="11" rx="1.5" fill="#6b3437" stroke="#e35d5d" stroke-width="1"/></svg></div>
<div class="a" style="left:391px;top:925px;width:1px;height:18px;background:#43454a;"></div>
<div class="ic" style="left:399px;top:926px"><svg width="16" height="16" viewBox="0 0 16 16" fill="none"><rect x="1.5" y="2.5" width="3" height="11" rx=".8" fill="#253627" stroke="#5fa865" stroke-width="1"/><path d="M7.5 2.8 L14.5 8 L7.5 13.2 z" fill="#253627" stroke="#5fa865" stroke-width="1" stroke-linejoin="round"/></svg></div>
<div class="ic" style="left:425px;top:926px"><svg width="16" height="16" viewBox="0 0 16 16" fill="none"><rect x="3.5" y="2.5" width="3" height="11" rx=".7" stroke="#5a5d63" stroke-width="1"/><rect x="9.5" y="2.5" width="3" height="11" rx=".7" stroke="#5a5d63" stroke-width="1"/></svg></div>
<div class="ic" style="left:452px;top:926px"><svg width="16" height="16" viewBox="0 0 16 16" fill="none"><path d="M2.5 14 h11" stroke="#ced0d6" stroke-width="1.1" stroke-linecap="round"/><path d="M2.5 9.5 c2 -4 7 -5 10 -0.8" stroke="#ced0d6" stroke-width="1.1" stroke-linecap="round"/><path d="M13.2 5 v4 h-4" stroke="#ced0d6" stroke-width="1.1" stroke-linecap="round" stroke-linejoin="round"/></svg></div>
<div class="ic" style="left:478px;top:926px"><svg width="16" height="16" viewBox="0 0 16 16" fill="none"><path d="M2.5 14 h11 M8 1.5 v9 M4.2 7 l3.8 3.8 l3.8 -3.8" stroke="#ced0d6" stroke-width="1.1" stroke-linecap="round" stroke-linejoin="round"/></svg></div>
<div class="ic" style="left:504px;top:926px"><svg width="16" height="16" viewBox="0 0 16 16" fill="none"><path d="M2.5 14 h11 M8 11 v-9 M4.2 5.8 l3.8 -3.8 l3.8 3.8" stroke="#ced0d6" stroke-width="1.1" stroke-linecap="round" stroke-linejoin="round"/></svg></div>
<div class="a" style="left:528px;top:925px;width:1px;height:18px;background:#43454a;"></div>
<div class="ic" style="left:537px;top:926px"><svg width="16" height="16" viewBox="0 0 16 16" fill="none"><circle cx="6" cy="10" r="4.5" fill="#402929" stroke="#db5c5c" stroke-width="1"/><path d="M6.2 4 a4.5 4.5 0 1 1 5.6 6" stroke="#db5c5c" stroke-width="1" stroke-linecap="round"/></svg></div>
<div class="ic" style="left:563px;top:926px"><svg width="16" height="16" viewBox="0 0 16 16" fill="none"><circle cx="8" cy="8" r="5.5" fill="#402929" stroke="#db5c5c" stroke-width="1"/><path d="M2 14 L14 2" stroke="#2b2d30" stroke-width="3"/><path d="M2 14 L14 2" stroke="#ced0d6" stroke-width="1.1" stroke-linecap="round"/></svg></div>
<div class="ic" style="left:589px;top:926px"><svg width="16" height="16" viewBox="0 0 16 16" fill="none"><rect x="7" y="2" width="2" height="2" rx=".4" fill="#ced0d6"/><rect x="7" y="7" width="2" height="2" rx=".4" fill="#ced0d6"/><rect x="7" y="12" width="2" height="2" rx=".4" fill="#ced0d6"/></svg></div>
<div class="a" style="left:12px;top:952px;width:1670px;height:28px;background:#393b40;"></div>
<div class="a" style="left:12px;top:951px;width:1670px;height:1px;background:#1e1f22;"></div>
<div class="ic" style="left:21px;top:958px"><svg width="16" height="16" viewBox="0 0 16 16" fill="none"><path d="M2.5 8.5 L6.2 12.2 L13.5 3.8" stroke="#e0653a" stroke-width="2" stroke-linecap="round" stroke-linejoin="round"/></svg></div>
<div class="t " style="left:40px;top:954.4px;letter-spacing:-0.26px">"Thread-21"@7,716 in group "main": RUNNING</div>
<div class="ic" style="left:368px;top:958px"><svg width="16" height="16" viewBox="0 0 16 16" fill="none"><path d="M2 2.5 h12 l-4.5 5.5 v5.5 l-3 -1.5 v-4 z" stroke="#ced0d6" stroke-width="1" stroke-linejoin="round"/></svg></div>
<div class="ic" style="left:398px;top:958px"><svg width="16" height="16" viewBox="0 0 16 16" fill="none"><path d="M4.3 6.3 L8 10 L11.7 6.3" stroke="#ced0d6" stroke-width="1.15" stroke-linecap="round" stroke-linejoin="round"/></svg></div>
<div class="a" style="left:421px;top:952px;width:1px;height:286px;background:#1e1f22;"></div>
<div class="t mono" style="left:431px;top:955.6999999999999px;font-size:13.3px;color:#6f737a">Evaluate expression (Enter) or add a watch (Ctrl+Shift+Enter)</div>
<div class="a" style="left:12px;top:980px;width:1670px;height:1px;background:#1e1f22;"></div>
<div class="a" style="left:12px;top:985px;width:409px;height:24px;background:#43454a;"></div>
<div class="a" style="left:12px;top:1009px;width:409px;height:24px;background:#3b3024;"></div>
<div class="ic" style="left:20px;top:989px"><svg width="16" height="16" viewBox="0 0 16 16" fill="none"><path d="M6 2.5 L2.5 6 L6 9.5 M2.5 6 h7 a3.5 3.5 0 0 1 0 7 h-2.5" stroke="#b4b8bf" stroke-width="1" stroke-linecap="round" stroke-linejoin="round"/></svg></div>
<div class="t " style="left:38px;top:985.4px;">executeJDBC:379, InternalStatement <i>(com.esproc.jdbc)</i></div>
<div class="t " style="left:38px;top:1009.4px;color:#868a91">run:218, InternalStatement$1 <i>(com.esproc.jdbc)</i></div>
<div class="ic" style="left:433px;top:989px"><svg width="16" height="16" viewBox="0 0 16 16" fill="none"><path d="M6.3 4.3 L10 8 L6.3 11.7" stroke="#9da0a8" stroke-width="1.15" stroke-linecap="round" stroke-linejoin="round"/></svg></div>
<div class="ic" style="left:455px;top:989px"><svg width="16" height="16" viewBox="0 0 16 16" fill="none"><rect x="3" y="1.5" width="10" height="3.2" rx=".6" fill="#3d3223" stroke="#d6ae58" stroke-width="1"/><rect x="3" y="6.4" width="10" height="3.2" rx=".6" fill="#3d3223" stroke="#d6ae58" stroke-width="1"/><rect x="3" y="11.3" width="10" height="3.2" rx=".6" fill="#3d3223" stroke="#d6ae58" stroke-width="1"/></svg></div>
<div class="t " style="left:474px;top:985.4px;"><span class="vn">this</span><span style="word-spacing:1px"> = </span><span style="color:#6f737a;letter-spacing:-0.13px">{InternalConnection$3@7710}</span></div>
<div class="ic" style="left:433px;top:1013px"><svg width="16" height="16" viewBox="0 0 16 16" fill="none"><path d="M6.3 4.3 L10 8 L6.3 11.7" stroke="#9da0a8" stroke-width="1.15" stroke-linecap="round" stroke-linejoin="round"/></svg></div>
<div class="ic" style="left:455px;top:1013px"><svg width="16" height="16" viewBox="0 0 16 16" fill="none"><circle cx="8" cy="8" r="6.5" fill="#45322b" stroke="#c77d55" stroke-width="1"/><path d="M6.5 11.5 v-6.5 h2 a1.9 1.9 0 0 1 0 3.8 h-2" stroke="#c77d55" stroke-width="1.1" stroke-linecap="round" stroke-linejoin="round"/></svg></div>
<div class="t " style="left:474px;top:1009.4px;"><span class="vn">sql</span><span style="word-spacing:1px"> = </span><span class="s">"call mybatis()"</span></div>
<div class="ic" style="left:455px;top:1037px"><svg width="16" height="16" viewBox="0 0 16 16" fill="none"><circle cx="8" cy="8" r="6.5" fill="#45322b" stroke="#c77d55" stroke-width="1"/><path d="M6.5 11.5 v-6.5 h2 a1.9 1.9 0 0 1 0 3.8 h-2" stroke="#c77d55" stroke-width="1.1" stroke-linecap="round" stroke-linejoin="round"/></svg></div>
<div class="t " style="left:474px;top:1033.4px;"><span class="vn">parameters</span><span style="word-spacing:1px"> = </span><span style="color:#6f737a;letter-spacing:-0.3px">{ArrayList@7711}</span>  size<span style="word-spacing:1px"> = </span>0</div>
<div class="ic" style="left:433px;top:1061px"><svg width="16" height="16" viewBox="0 0 16 16" fill="none"><path d="M6.3 4.3 L10 8 L6.3 11.7" stroke="#9da0a8" stroke-width="1.15" stroke-linecap="round" stroke-linejoin="round"/></svg></div>
<div class="ic" style="left:455px;top:1061px"><svg width="16" height="16" viewBox="0 0 16 16" fill="none"><circle cx="8" cy="8" r="6.5" fill="#45322b" stroke="#c77d55" stroke-width="1"/><path d="M6.5 11.5 v-6.5 h2 a1.9 1.9 0 0 1 0 3.8 h-2" stroke="#c77d55" stroke-width="1.1" stroke-linecap="round" stroke-linejoin="round"/></svg></div>
<div class="t " style="left:474px;top:1057.4px;"><span class="vn">con</span><span style="word-spacing:1px"> = </span><span style="color:#6f737a;letter-spacing:-0.15px">{InternalDriver$1@6654}</span></div>
<div class="ic" style="left:455px;top:1085px"><svg width="16" height="16" viewBox="0 0 16 16" fill="none"><circle cx="8" cy="8" r="6.5" fill="#45322b" stroke="#c77d55" stroke-width="1"/><path d="M6.5 11.5 v-6.5 h2 a1.9 1.9 0 0 1 0 3.8 h-2" stroke="#c77d55" stroke-width="1.1" stroke-linecap="round" stroke-linejoin="round"/></svg></div>
<div class="t " style="left:474px;top:1081.4px;"><span class="vn">isUpdate</span><span style="word-spacing:1px"> = </span>false</div>
<div class="ic" style="left:433px;top:1109px"><svg width="16" height="16" viewBox="0 0 16 16" fill="none"><path d="M6.3 4.3 L10 8 L6.3 11.7" stroke="#9da0a8" stroke-width="1.15" stroke-linecap="round" stroke-linejoin="round"/></svg></div>
<div class="ic" style="left:455px;top:1109px"><svg width="16" height="16" viewBox="0 0 16 16" fill="none"><rect x="3" y="1.5" width="10" height="3.2" rx=".6" fill="#3d3223" stroke="#d6ae58" stroke-width="1"/><rect x="3" y="6.4" width="10" height="3.2" rx=".6" fill="#3d3223" stroke="#d6ae58" stroke-width="1"/><rect x="3" y="11.3" width="10" height="3.2" rx=".6" fill="#3d3223" stroke="#d6ae58" stroke-width="1"/></svg></div>
<div class="t " style="left:474px;top:1105.4px;"><span class="vn">e</span><span style="word-spacing:1px"> = </span><span style="color:#6f737a;letter-spacing:-0.34px">{RQException@7755}</span> <span style="letter-spacing:-0.07px">"com.scudata.common.RQException: </span><span style="font-size:12.8px">单元格</span>[mybatis.spl].A1<span style="font-size:12.8px">中有错误</span><span style="color:#cf8e6d">\n</span>mysql<span style="font-size:12.8px">：数据库连接工厂不存在</span>"<span style="color:#548af7;letter-spacing:-0.4px"><span style="margin-left:4.2px">...</span><span style="margin-left:6.4px">View</span></span></div>
<div class="ic" style="left:433px;top:1133px"><svg width="16" height="16" viewBox="0 0 16 16" fill="none"><path d="M6.3 4.3 L10 8 L6.3 11.7" stroke="#9da0a8" stroke-width="1.15" stroke-linecap="round" stroke-linejoin="round"/></svg></div>
<div class="ic" style="left:455px;top:1133px"><svg width="16" height="16" viewBox="0 0 16 16" fill="none"><rect x="3" y="1.5" width="10" height="3.2" rx=".6" fill="#3d3223" stroke="#d6ae58" stroke-width="1"/><rect x="3" y="6.4" width="10" height="3.2" rx=".6" fill="#3d3223" stroke="#d6ae58" stroke-width="1"/><rect x="3" y="11.3" width="10" height="3.2" rx=".6" fill="#3d3223" stroke="#d6ae58" stroke-width="1"/></svg></div>
<div class="t " style="left:474px;top:1129.4px;"><span class="vn">t</span><span style="word-spacing:1px"> = </span><span style="color:#6f737a;letter-spacing:-0.34px">{RQException@7755}</span> <span style="letter-spacing:-0.07px">"com.scudata.common.RQException: </span><span style="font-size:12.8px">单元格</span>[mybatis.spl].A1<span style="font-size:12.8px">中有错误</span><span style="color:#cf8e6d">\n</span>mysql<span style="font-size:12.8px">：数据库连接工厂不存在</span>"<span style="color:#548af7;letter-spacing:-0.4px"><span style="margin-left:4.2px">...</span><span style="margin-left:6.4px">View</span></span></div>
<div class="ic" style="left:433px;top:1157px"><svg width="16" height="16" viewBox="0 0 16 16" fill="none"><path d="M6.3 4.3 L10 8 L6.3 11.7" stroke="#9da0a8" stroke-width="1.15" stroke-linecap="round" stroke-linejoin="round"/></svg></div>
<div class="ic" style="left:455px;top:1157px"><svg width="16" height="16" viewBox="0 0 16 16" fill="none"><circle cx="4.2" cy="8.5" r="2.7" stroke="#ced0d6" stroke-width="1.2"/><circle cx="11.8" cy="8.5" r="2.7" stroke="#ced0d6" stroke-width="1.2"/><path d="M6.9 8 c.6 -.6 1.6 -.6 2.2 0" stroke="#ced0d6" stroke-width="1.1"/></svg></div>
<div class="t " style="left:474px;top:1153.4px;"><span class="vn">this.ctx</span><span style="word-spacing:1px"> = </span><span style="color:#6f737a;letter-spacing:-0.2px">{Context@7724}</span></div>
<svg class="a" style="left:0;top:0" width="1682" height="1238" viewBox="0 0 1682 1238" fill="none" stroke="#e8152b" stroke-linecap="round" stroke-linejoin="round">
<path d="M104 193 C125 191 160 191.5 186 190.5" stroke-width="2.8"/>
<path d="M202.7 192.3 C204.4 192.5 209.3 192.4 212.7 193.3 C216.1 194.2 219.8 195.8 223.3 198 C226.9 200.2 230.2 203.7 234 206.7 C237.8 209.7 242.2 212.8 246 216 C249.8 219.2 253.4 222.2 256.7 226 C260.0 229.8 262.9 234.1 266 238.7 C269.1 243.2 272.2 248.4 275.3 253.3 C278.4 258.2 281.4 263.0 284.7 268 C288.0 273.0 291.5 278.2 295.3 283.3 C299.1 288.4 303.1 293.5 307.3 298.7 C311.5 303.9 316.2 309.4 320.7 314.7 C325.1 320.0 329.8 325.7 334 330.5 C338.2 335.3 341.8 339.1 346 343.5 C350.2 347.9 353.8 351.5 359.2 356.8 C364.6 362.1 372.1 369.4 378.5 375.3 C384.9 381.2 391.8 387.2 397.7 392.5 C403.6 397.8 408.7 402.0 414.2 406.9 C419.7 411.8 425.0 416.9 430.7 422 C436.4 427.1 442.6 432.8 448.5 437.8 C454.4 442.9 460.4 447.6 466.4 452.3 C472.3 457.0 477.8 461.3 484.2 466 C490.6 470.7 498.4 476.2 504.8 480.4 C511.2 484.6 517.2 488.0 522.7 491.4 C528.2 494.8 530.8 495.9 537.8 500.5 C544.8 505.1 557.5 514.2 565 519 C572.5 523.8 576.9 525.8 582.7 529.5 C588.5 533.2 594.1 537.2 600 541 C605.9 544.8 610.8 547.7 618.3 552.5 C625.8 557.3 638.1 565.5 645.1 569.8 C652.1 574.1 655.5 576.0 660 578.5 C664.5 581.0 669.9 583.9 671.9 585" stroke-width="2.8"/>
<path d="M143 540 C175 543 215 545 255 542" stroke-width="2.8"/>
<path d="M1173 1130.5 L1240 1130.5" stroke-width="3.4"/>
<path d="M1236 1122 L1263 1130.5 L1236 1137 Z" fill="#e8152b" stroke-width="1.5"/>
</svg>
</div></body></html>
